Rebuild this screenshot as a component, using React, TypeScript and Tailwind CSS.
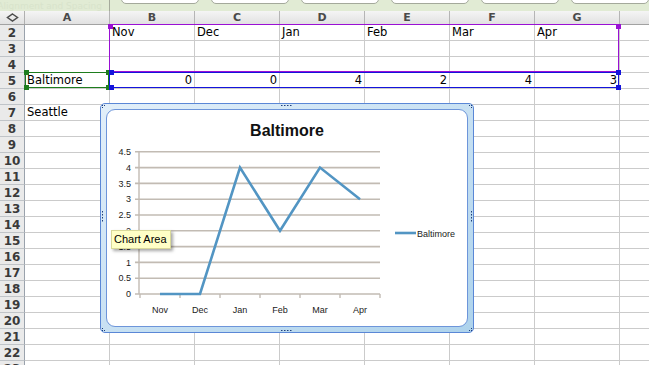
import React from "react";

const COLS = ["A", "B", "C", "D", "E", "F", "G", ""];
const ROWS = Array.from({ length: 22 }, (_, i) => i + 2);
const DATA: Record<number, string[]> = {
  2: ["", "Nov", "Dec", "Jan", "Feb", "Mar", "Apr", ""],
  5: ["Baltimore", "0", "0", "4", "2", "4", "3", ""],
  7: ["Seattle", "", "", "", "", "", "", ""],
};
const NUMERIC: Record<number, boolean> = { 5: true };

const months = ["Nov", "Dec", "Jan", "Feb", "Mar", "Apr"];
const vals = [0, 0, 4, 2, 4, 3];
const xs = [160, 200, 240, 280, 320, 360];
const yv = (v: number) => 294 - v * 31.6;

function Chart() {
  const grid = [0.5, 1, 1.5, 2, 2.5, 3, 3.5, 4, 4.5];
  const labels = ["0", "0.5", "1", "1.5", "2", "2.5", "3", "3.5", "4", "4.5"];
  const pts = xs.map((x, i) => `${x},${yv(vals[i])}`).join(" ");
  const dot = "#1f3f7a";
  return (
    <svg
      className="absolute left-0 top-0"
      width={372}
      height={228}
      viewBox="101 104 372 228"
    >
      <g fill={dot}>
        <rect x={102} y={105} width={1} height={1} />
        <rect x={104} y={105} width={1} height={1} />
        <rect x={102} y={107} width={1} height={1} />
        {[281, 284, 287, 290].map((x) => (
          <rect key={x} x={x} y={105} width={1.5} height={1} />
        ))}
        {[281, 284, 287, 290].map((x) => (
          <rect key={"b" + x} x={x} y={330} width={1.5} height={1} />
        ))}
        <rect x={469} y={105} width={1} height={1} />
        <rect x={471} y={105} width={1} height={1} />
        <rect x={471} y={107} width={1} height={1} />
        {[211, 214, 217, 220].map((y) => (
          <rect key={"l" + y} x={102} y={y} width={1} height={1.5} />
        ))}
        {[211, 214, 217, 220].map((y) => (
          <rect key={"r" + y} x={471} y={y} width={1} height={1.5} />
        ))}
        <rect x={102} y={328} width={1} height={1} />
        <rect x={102} y={330} width={1} height={1} />
        <rect x={104} y={330} width={1} height={1} />
        <rect x={469} y={330} width={1} height={1} />
        <rect x={471} y={330} width={1} height={1} />
        <rect x={471} y={328} width={1} height={1} />
      </g>
      <text
        x={287}
        y={136}
        textAnchor="middle"
        fontFamily="'Liberation Sans', Arial, sans-serif"
        fontWeight="bold"
        fontSize={16}
        fill="#111"
      >
        Baltimore
      </text>
      {grid.map((g) => (
        <line
          key={g}
          x1={135}
          x2={380}
          y1={yv(g)}
          y2={yv(g)}
          stroke="#c2bbb3"
          strokeWidth={1.6}
        />
      ))}
      <line x1={139} x2={139} y1={151} y2={294} stroke="#c2bbb3" strokeWidth={1.4} />
      <line x1={135} x2={380} y1={294} y2={294} stroke="#c2bbb3" strokeWidth={1.6} />
      {[140, 180, 220, 260, 300, 340, 380].map((x) => (
        <line key={x} x1={x} x2={x} y1={294} y2={298} stroke="#c2bbb3" strokeWidth={1.4} />
      ))}
      {labels.map((l, i) => (
        <text
          key={l}
          x={131}
          y={yv(i * 0.5) + 3.2}
          textAnchor="end"
          fontFamily="'Liberation Sans', Arial, sans-serif"
          fontSize={9}
          fill="#1a1a1a"
        >
          {l}
        </text>
      ))}
      {months.map((m, i) => (
        <text
          key={m}
          x={xs[i]}
          y={313}
          textAnchor="middle"
          fontFamily="'Liberation Sans', Arial, sans-serif"
          fontSize={9}
          fill="#1a1a1a"
        >
          {m}
        </text>
      ))}
      <polyline
        points={pts}
        fill="none"
        stroke="#5295c3"
        strokeWidth={2.6}
        strokeLinejoin="miter"
      />
      <line x1={395} x2={416} y1={233} y2={233} stroke="#5295c3" strokeWidth={2.6} />
      <text
        x={417}
        y={237}
        fontFamily="'Liberation Sans', Arial, sans-serif"
        fontSize={9}
        fill="#1a1a1a"
      >
        Baltimore
      </text>
    </svg>
  );
}

function Handle({ className }: { className: string }) {
  return <div className={"absolute w-[5px] h-[5px] " + className} />;
}

export default function App() {
  return (
    <div
      className="relative w-[649px] h-[365px] overflow-hidden bg-white"
      style={{ fontFamily: "'DejaVu Sans', Verdana, sans-serif" }}
    >
      {/* toolbar strip */}
      <div className="flex h-[11px] bg-[#e1ebd4] overflow-hidden">
        <div className="w-[145px] flex justify-center items-start">
          <span className="text-[9px] leading-[12px] text-[#d8e3cb] ml-[-10px]">
            Alignment and Spacing
          </span>
        </div>
        <div className="w-px bg-[#a5aa9c]" />
        <div className="ml-[11px] flex gap-[12px] items-start">
          {[0, 1, 2, 3, 4, 5].map((i) => (
            <div
              key={i}
              className="w-[78px] h-[14px] -mt-[10px] rounded-[5px] border border-[#a4a99b] bg-white shrink-0"
            />
          ))}
        </div>
      </div>

      <div className="w-[705px]">
        {/* column headers */}
        <div className="grid grid-cols-[25px_repeat(8,85px)] h-[14px] border-b border-[#a2a2a2] bg-gradient-to-b from-[#f5f5f5] to-[#e1e1e1]">
          <div className="border-r border-[#b0b0b0] flex items-center justify-center">
            <svg width="13" height="9" viewBox="0 0 13 9">
              <path d="M6.5 1 L11.5 4.5 L6.5 8 L1.5 4.5 Z" fill="none" stroke="#4d4d4d" strokeWidth="1.5" />
            </svg>
          </div>
          {COLS.map((c, i) => (
            <div
              key={i}
              className="border-r border-[#b5b5b5] flex items-center justify-center text-[11px] font-bold text-[#4a4a4a] leading-none"
            >
              {c}
            </div>
          ))}
        </div>

        {/* rows */}
        {ROWS.map((r) => {
          const d = DATA[r] || [];
          return (
            <div key={r} className="grid grid-cols-[25px_repeat(8,85px)] h-[16px]">
              <div className="bg-[#eaeaea] border-r border-b border-r-[#9aa2ac] border-b-[#c0c4c8] flex items-center justify-center text-[12px] font-bold text-[#3a3a3a] leading-none">
                {r}
              </div>
              {COLS.map((c, i) => (
                <div
                  key={i}
                  className={
                    "border-r border-b border-[#cbcbcb] text-[11.5px] leading-[15px] text-black whitespace-nowrap " +
                    (NUMERIC[r] && i > 0 ? "text-right pr-[2px]" : "pl-[2px]")
                  }
                >
                  {d[i] || ""}
                </div>
              ))}
            </div>
          );
        })}
      </div>

      {/* selection overlays */}
      <div className="absolute left-[109px] top-[24px] w-[510px] h-[48px] border border-[#9a10d4]" />
      <div className="absolute left-[109px] top-[72px] w-[510px] h-[16px] border border-[#1414dc]" />
      <div className="absolute left-[25px] top-[72px] w-[84px] h-[16px] border border-[#1e7d1e]" />
      <Handle className="left-[108px] top-[24px] bg-[#9a10d4] h-[3px]" />
      <Handle className="left-[616px] top-[24px] bg-[#9a10d4] h-[3px]" />
      <Handle className="left-[24px] top-[70px] w-[3px] bg-[#1e7d1e]" />
      <Handle className="left-[24px] top-[85px] w-[3px] bg-[#1e7d1e]" />
      <Handle className="left-[106px] top-[70px] w-[3px] bg-[#1e7d1e]" />
      <Handle className="left-[106px] top-[85px] w-[3px] bg-[#1e7d1e]" />
      <Handle className="left-[109px] top-[70px] bg-[#1414dc]" />
      <Handle className="left-[109px] top-[85px] bg-[#1414dc]" />
      <Handle className="left-[616px] top-[70px] bg-[#1414dc]" />
      <Handle className="left-[616px] top-[85px] bg-[#1414dc]" />

      {/* chart */}
      <div className="absolute left-[100px] top-[103px] w-[374px] h-[230px] rounded-[5px] border border-[#5a87d6] bg-gradient-to-br from-[#e2eff9] to-[#aed3ec] p-[5px]">
        <div className="w-full h-full rounded-[9px] border border-[#6d95da] bg-white" />
        <Chart />
      </div>

      {/* tooltip */}
      <div
        className="absolute left-[111px] top-[230px] w-[60px] h-[19px] bg-[#ffffc6] border border-[#d9d99a] shadow-[2px_2px_3px_rgba(0,0,0,0.35)] text-[11px] leading-[17px] pl-[2px] text-black whitespace-nowrap"
        style={{ fontFamily: "'Liberation Sans', Arial, sans-serif" }}
      >
        Chart Area
      </div>
    </div>
  );
}
